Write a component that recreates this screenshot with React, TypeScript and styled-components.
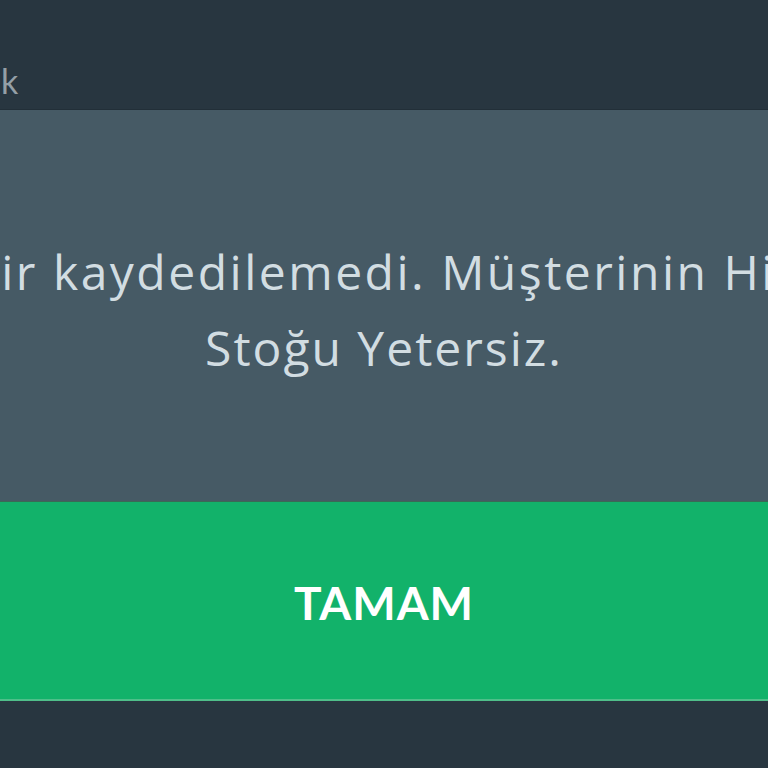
import React from "react";
import styled, { createGlobalStyle } from "styled-components";

const GlobalStyle = createGlobalStyle`
  html, body {
    margin: 0;
    padding: 0;
    background: #283640;
    overflow: hidden;
  }
  body {
    font-family: Lato, "Open Sans", "Noto Sans", sans-serif;
  }
`;

const Screen = styled.div`
  width: 768px;
  height: 768px;
  display: flex;
  flex-direction: column;
  background: #283640;
  overflow: hidden;
`;

const TopBar = styled.div`
  height: 110px;
  display: flex;
  align-items: flex-end;
  padding-bottom: 11px;
  box-sizing: border-box;
  border-bottom: 1px solid #222f38;
`;

const TopTitle = styled.span`
  font-size: 34px;
  color: #949fa6;
  margin-left: -26px;
  line-height: 1;
`;

const Dialog = styled.div`
  display: flex;
  flex-direction: column;
`;

const Body = styled.div`
  height: 391px;
  background: #465a65;
  display: flex;
  flex-direction: column;
  align-items: center;
  justify-content: center;
  padding-top: 8px;
  box-sizing: border-box;
`;

const Line = styled.div<{ $indent?: number; $spacing?: number }>`
  white-space: nowrap;
  font-family: "Open Sans", Lato, sans-serif;
  font-size: 48px;
  line-height: 76px;
  letter-spacing: ${(p) => p.$spacing ?? 2}px;
  color: #d2dde2;
  text-align: center;
  padding-left: ${(p) => p.$indent ?? 0}px;
`;

const Button = styled.button`
  height: 200px;
  border: none;
  background: #12b26a;
  color: #ffffff;
  font-family: Lato, "Open Sans", sans-serif;
  font-weight: 700;
  font-size: 46px;
  letter-spacing: 1px;
  border-top: 1px solid #3a6a55;
  border-bottom: 2px solid #4fbf8a;
  padding: 4px 0 0;
`;

export default function App() {
  return (
    <>
      <GlobalStyle />
      <Screen>
        <TopBar>
          <TopTitle>Ok</TopTitle>
        </TopBar>
        <Dialog>
          <Body>
            <Line $indent={54} $spacing={2.5}>
              Emir kaydedilemedi. Müşterinin Hizmet
            </Line>
            <Line>Stoğu Yetersiz.</Line>
          </Body>
          <Button>TAMAM</Button>
        </Dialog>
      </Screen>
    </>
  );
}
